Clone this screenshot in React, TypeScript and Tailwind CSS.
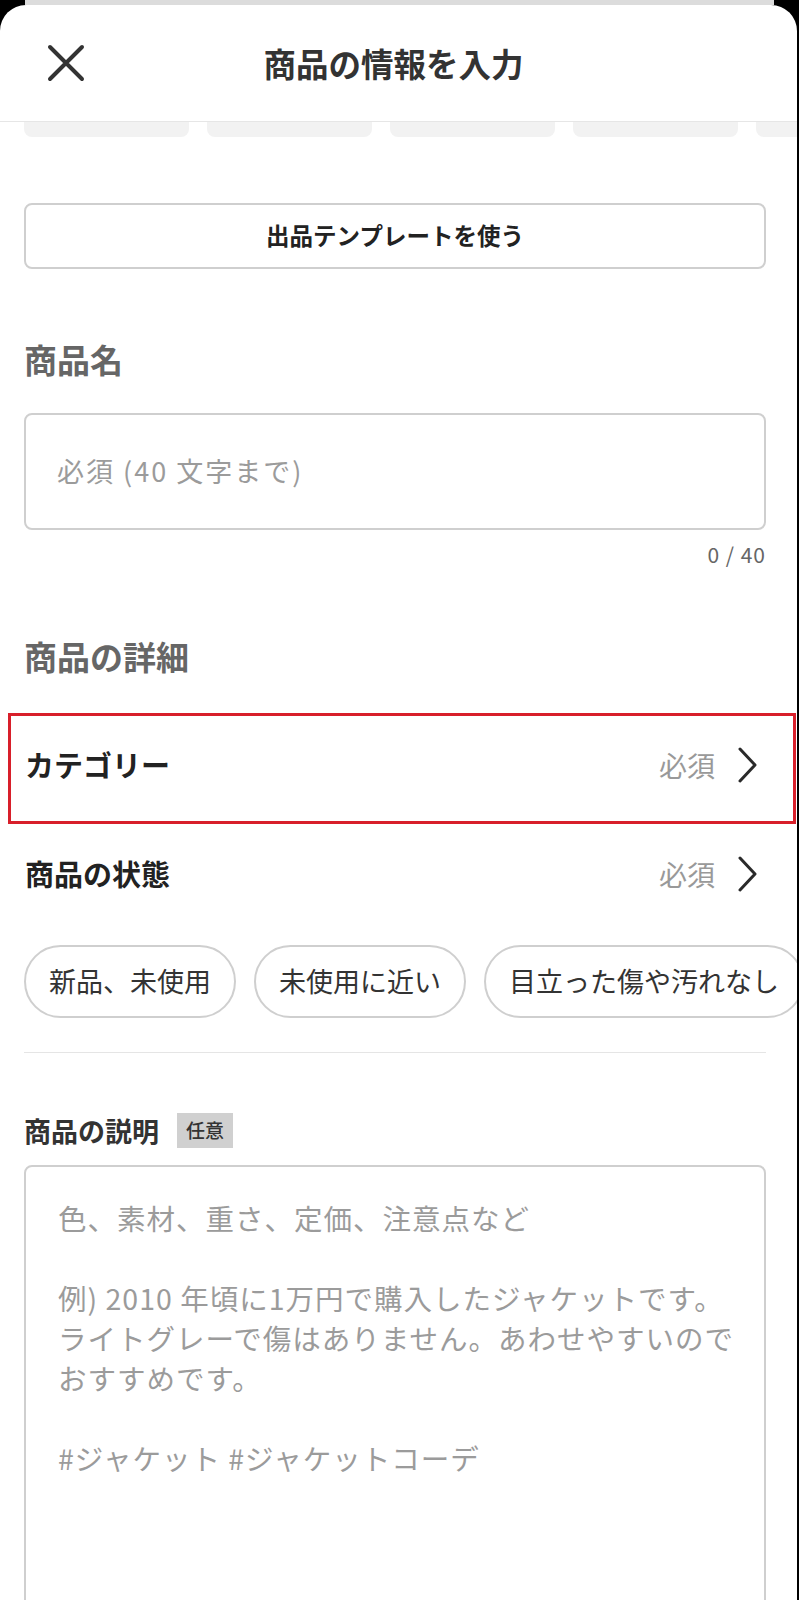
import React from 'react';

const conditions = ['新品、未使用', '未使用に近い', '目立った傷や汚れなし'];

function Chevron() {
  return (
    <svg width="22" height="36" viewBox="0 0 22 36" fill="none" className="shrink-0">
      <path d="M3 2 L18 18 L3 34" stroke="#2a2a2a" strokeWidth="3" strokeLinecap="round" strokeLinejoin="round" />
    </svg>
  );
}

export default function App() {
  return (
    <div className="w-[799px] h-[1600px] overflow-hidden bg-black font-['Noto_Sans_CJK_JP','Noto_Sans',sans-serif]">
      <div className="mx-[25px] h-[5px] bg-[#dcdcdc]" />
      <div className="mr-[2px] h-[1595px] overflow-hidden rounded-t-[26px] bg-white">
        {/* header */}
        <div className="grid h-[117px] grid-cols-[1fr_auto_1fr] items-center border-b border-[#e6e6e6]">
          <div className="pl-[47px]">
            <svg width="38" height="38" viewBox="0 0 38 38" fill="none">
              <path d="M3 3 L35 35 M35 3 L3 35" stroke="#333" strokeWidth="4" strokeLinecap="round" />
            </svg>
          </div>
          <h1 className="mr-[10px] text-[32.5px] font-bold leading-none text-[#333]">商品の情報を入力</h1>
          <div />
        </div>

        {/* photo cards peeking under header */}
        <div className="flex h-[15px] gap-[18px] overflow-hidden pl-[24px]">
          {[0, 1, 2, 3, 4].map((i) => (
            <div key={i} className="h-[15px] w-[165px] shrink-0 rounded-b-[8px] bg-[#f2f2f2]" />
          ))}
        </div>

        <div className="pl-[24px] pr-[31px]">
          <button className="mt-[66px] flex h-[66px] w-full items-center justify-center rounded-[8px] border-2 border-[#cfcfcf] text-[23.5px] font-bold text-[#222]">
            出品テンプレートを使う
          </button>

          <h2 className="mt-[74px] h-[32px] text-[33px] font-bold leading-[32px] text-[#666]">商品名</h2>
          <div className="mt-[38px] flex h-[117px] items-center rounded-[8px] border-2 border-[#cfcfcf] pl-[31px] text-[27px] tracking-[2px] text-[#9b9b9b]">
            必須 (40 文字まで)
          </div>
          <p className="mt-[14px] text-right text-[21px] leading-[20px] tracking-[1px] text-[#666]">0 / 40</p>

          <h2 className="mt-[76px] h-[32px] text-[33px] font-bold leading-[32px] text-[#666]">商品の詳細</h2>

          <div className="-ml-[16px] -mr-[30px] mt-[41px] flex h-[111px] items-center justify-between border-[3px] border-[#d81f2a] pb-[7px] pl-[14px] pr-[34px]">
            <span className="text-[29px] font-bold text-[#222]">カテゴリー</span>
            <div className="flex items-center gap-[22px]">
              <span className="text-[28px] text-[#999]">必須</span>
              <Chevron />
            </div>
          </div>

          <div className="flex h-[100px] items-center justify-between pr-[7px]">
            <span className="pl-px text-[29px] font-bold text-[#222]">商品の状態</span>
            <div className="flex items-center gap-[22px]">
              <span className="text-[28px] text-[#999]">必須</span>
              <Chevron />
            </div>
          </div>

          <div className="-mr-[31px] mt-[21px] flex gap-[18px] overflow-hidden">
            {conditions.map((c) => (
              <div
                key={c}
                className="flex h-[73px] shrink-0 items-center whitespace-nowrap rounded-full border-2 border-[#cfcfcf] px-[23px] text-[27px] text-[#333]"
              >
                {c}
              </div>
            ))}
          </div>

          <div className="mt-[34px] h-px bg-[#e5e5e5]" />

          <div className="mt-[60px] flex items-center">
            <span className="text-[27px] font-bold leading-none text-[#333]">商品の説明</span>
            <span className="ml-[18px] flex h-[35px] items-center bg-[#d0d0d0] px-[9px] text-[19px] font-medium text-[#333]">任意</span>
          </div>

          <div className="mt-[17px] h-[500px] rounded-[8px] border-2 border-[#cfcfcf] pl-[32px] pt-[31px] text-[28.5px] leading-[40px] tracking-[1px] text-[#9b9b9b]">
            <p>色、素材、重さ、定価、注意点など</p>
            <p>&nbsp;</p>
            <p>例) 2010 年頃に1万円で購入したジャケットです。</p>
            <p>ライトグレーで傷はありません。あわせやすいので</p>
            <p>おすすめです。</p>
            <p>&nbsp;</p>
            <p>#ジャケット #ジャケットコーデ</p>
          </div>
        </div>
      </div>
    </div>
  );
}
